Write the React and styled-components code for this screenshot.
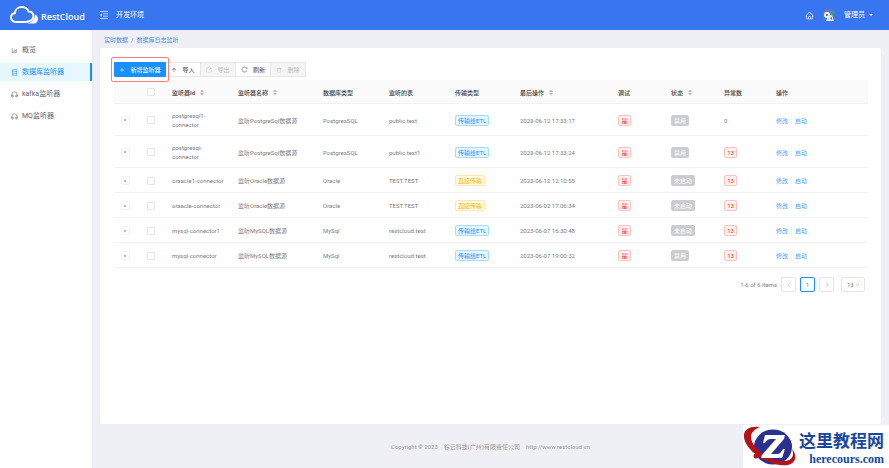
import React from 'react';
import styled, { createGlobalStyle, css } from 'styled-components';
import {
  AiOutlineArrowUp,
  AiOutlineBarChart,
  AiOutlineDatabase,
  AiOutlineDelete,
  AiOutlineDown,
  AiOutlineExport,
  AiOutlineHome,
  AiOutlineLeft,
  AiOutlinePlus,
  AiOutlineReload,
  AiOutlineRight,
} from 'react-icons/ai';
import { FiHeadphones } from 'react-icons/fi';

const palette = {
  header: '#3875f0',
  primary: '#1890ff',
  link: '#4ba3fb',
  text: '#7c7c7c',
  heading: '#444',
  line: '#f2f2f2',
  border: '#e6e6e6',
  page: '#eff0f5',
};

const GlobalStyle = createGlobalStyle`
  * {
    box-sizing: border-box;
  }

  body {
    margin: 0;
    background: ${palette.page};
    color: ${palette.text};
    font-family: Roboto, 'Noto Sans CJK SC', sans-serif;
    font-size: 6px;
    line-height: 9px;
  }

  button,
  select {
    font: inherit;
  }

  a {
    text-decoration: none;
  }
`;

const Page = styled.div`
  display: flex;
  flex-direction: column;
  min-height: 100vh;
`;

const Header = styled.header`
  display: flex;
  align-items: center;
  height: 30px;
  padding: 0 16px 0 10px;
  background: ${palette.header};
  color: #fff;
`;

const Brand = styled.a`
  display: flex;
  align-items: center;
  gap: 3px;
  width: 90px;
  color: #fff;
  font-family: 'Open Sans', sans-serif;
  font-size: 9px;
  font-weight: 600;
  line-height: 12px;

  span {
    margin-top: 4px;
  }
`;

const HeaderTitle = styled.div`
  display: flex;
  flex: 1;
  align-items: center;
  gap: 8px;
  font-size: 7px;
`;

const HeaderUser = styled.div`
  display: flex;
  align-items: center;
  gap: 9px;
  font-size: 7px;
`;

const UserButton = styled.button`
  display: flex;
  align-items: center;
  gap: 4px;
  padding: 0;
  border: 0;
  background: none;
  color: #fff;
  font-size: 7px;
`;

const Caret = styled.i`
  border: 2px solid transparent;
  border-top: 2px solid #fff;
  border-bottom: 0;
`;

const Body = styled.div`
  display: flex;
  flex: 1;
`;

const Sidebar = styled.nav`
  display: flex;
  flex-direction: column;
  flex: 0 0 93px;
  gap: 4px;
  padding-top: 11px;
  border-right: 1px solid #e8e9ee;
  background: #fff;
`;

const MenuItem = styled.a`
  display: flex;
  align-items: center;
  gap: 4px;
  height: 18px;
  padding-left: 11px;
  color: #666;
  font-size: 7px;

  ${({ $active }) =>
    $active &&
    css`
      border-right: 2px solid ${palette.primary};
      background: #e6f7ff;
      color: ${palette.primary};
    `}
`;

const Content = styled.div`
  display: flex;
  flex: 1;
  flex-direction: column;
  min-width: 0;
  padding: 0 8px 0 7px;
`;

const Breadcrumb = styled.div`
  display: flex;
  align-items: center;
  gap: 3px;
  height: 18px;
  padding-left: 4px;

  a {
    color: #4a90e8;
  }
`;

const Card = styled.main`
  flex: 1;
  padding: 14px 13px 14px 14px;
  border-radius: 2px;
  background: #fff;
`;

const Toolbar = styled.div`
  display: flex;
  height: 15px;
  margin-bottom: 3px;
`;

const ToolButton = styled.button`
  display: flex;
  align-items: center;
  justify-content: center;
  gap: 5px;
  width: 35px;
  padding: 0;
  border: 1px solid ${palette.border};
  border-left-width: 0;
  background: #fff;
  color: #444;

  &:disabled {
    background: #f5f5f5;
    color: #bbb;
  }
`;

const PrimaryButton = styled(ToolButton)`
  width: 52px;
  border: 0;
  border-radius: 1px;
  background: ${palette.primary};
  color: #fff;
`;

const Highlight = styled.div`
  position: relative;
  display: flex;

  &::after {
    content: '';
    position: absolute;
    inset: -5px -3px;
    border: 1px solid #f58080;
    border-radius: 2px;
    pointer-events: none;
  }
`;

const Table = styled.table`
  width: 100%;
  border-spacing: 0;
  table-layout: fixed;

  th,
  td {
    padding: 7px 6px 6px;
    border-bottom: 1px solid ${palette.line};
    text-align: left;
    overflow-wrap: break-word;
  }

  th {
    height: 24px;
    background: #fafafa;
    color: ${palette.heading};
    font-weight: 500;
  }

  td {
    height: 25px;
  }
`;

const HeadLabel = styled.span`
  display: flex;
  align-items: center;
  gap: 5px;
`;

const Center = styled.div`
  display: flex;
  justify-content: center;
`;

const Checkbox = styled.input.attrs({ type: 'checkbox' })`
  appearance: none;
  width: 8px;
  height: 8px;
  margin: 0;
  border: 1px solid ${palette.border};
  border-radius: 1px;
  background: #fff;

  &:checked {
    background: ${palette.primary};
  }
`;

const ExpandButton = styled.button`
  display: flex;
  align-items: center;
  justify-content: center;
  width: 9px;
  height: 9px;
  padding: 0;
  border: 1px solid ${palette.line};
  border-radius: 2px;
  background: #fff;
  color: #555;
`;

const tagTones = {
  blue: css`
    border-color: #a6dcff;
    background: #e6f7ff;
    color: #1890ff;
  `,
  orange: css`
    border-color: #ffe7b0;
    background: #fffbe6;
    color: #faad14;
  `,
  red: css`
    border-color: #ffc2be;
    background: #fff1f0;
    color: #f5222d;
  `,
  gray: css`
    border-color: #ccc;
    background: #ccc;
    color: #fff;
  `,
};

const Tag = styled.span`
  display: block;
  width: fit-content;
  min-width: 13px;
  padding: 0 2px;
  border: 1px solid;
  border-radius: 2px;
  margin: -1px 0;
  text-align: center;
  white-space: nowrap;
  ${({ $tone }) => tagTones[$tone]}
`;

const Actions = styled.div`
  display: flex;
  gap: 3px;

  a {
    color: ${palette.link};
  }

  a + a {
    padding-left: 3px;
    border-left: 1px solid ${palette.line};
  }
`;

const Pagination = styled.div`
  display: flex;
  align-items: center;
  justify-content: flex-end;
  gap: 4px;
  padding: 9px 3px 0 0;
`;

const PageButton = styled.button`
  display: flex;
  align-items: center;
  justify-content: center;
  width: 15px;
  height: 15px;
  padding: 0;
  border: 1px solid ${({ $active }) => ($active ? palette.primary : palette.border)};
  border-radius: 2px;
  background: #fff;
  color: ${({ $active }) => ($active ? palette.primary : '#bbb')};
`;

const PageSize = styled.label`
  display: grid;
  align-items: center;
  width: 24px;
  height: 15px;
  margin-left: 3px;
  border: 1px solid ${palette.border};
  border-radius: 2px;

  select,
  svg {
    grid-area: 1 / 1;
  }

  select {
    appearance: none;
    width: 100%;
    padding: 0 0 0 5px;
    border: 0;
    background: none;
    color: ${palette.text};
  }

  svg {
    justify-self: end;
    margin-right: 4px;
    color: #aaa;
    pointer-events: none;
  }
`;

const Footer = styled.footer`
  display: flex;
  align-items: center;
  justify-content: center;
  gap: 6px;
  height: 44px;
  color: #999;

  a {
    color: #999;
  }
`;

const Watermark = styled.aside`
  position: fixed;
  right: 0;
  bottom: 0;
  display: flex;
  align-items: center;
  gap: 1px;
  height: 43px;
  padding-right: 5px;
  background: #fff;
  color: #17479e;
`;

const WatermarkText = styled.div`
  display: flex;
  flex-direction: column;
  align-items: flex-end;
  font-family: 'Noto Sans CJK SC', sans-serif;
  font-size: 17px;
  font-weight: 700;
  line-height: 25px;

  small {
    font-family: 'Liberation Serif', serif;
    font-size: 12px;
    line-height: 14px;
  }
`;

const menu = [
  { label: '概览', icon: AiOutlineBarChart },
  { label: '数据库监听器', icon: AiOutlineDatabase, active: true },
  { label: 'kafka监听器', icon: FiHeadphones },
  { label: 'MQ监听器', icon: FiHeadphones },
];

const columns = [
  { width: 22 },
  { width: 30, checkbox: true },
  { width: 66, label: '监听器Id', sortable: true },
  { width: 85, label: '监听器名称', sortable: true },
  { width: 66, label: '数据库类型' },
  { width: 66, label: '监听的表' },
  { width: 65, label: '传输类型' },
  { width: 98, label: '最后操作', sortable: true },
  { width: 53, label: '调试' },
  { width: 53, label: '状态', sortable: true },
  { width: 52, label: '异常数' },
  { width: 98, label: '操作' },
];

const rows = [
  ['postgresql1-connector', '监听PostgreSql数据源', 'PostgresSQL', 'public.test', '传输给ETL', '2023-06-12 17:33:17', '禁用', 0],
  ['postgresql-connector', '监听PostgreSql数据源', 'PostgresSQL', 'public.test1', '传输给ETL', '2023-06-12 17:33:24', '禁用', 13],
  ['oraacle1-connector', '监听Oracle数据源', 'Oracle', 'TEST.TEST', '直接传输', '2023-06-12 12:10:55', '未启动', 13],
  ['oraacle-connector', '监听Oracle数据源', 'Oracle', 'TEST.TEST', '直接传输', '2023-06-02 17:06:34', '未启动', 13],
  ['mysql-connector1', '监听MySQL数据源', 'MySql', 'restcloud.test', '传输给ETL', '2023-06-07 16:30:48', '未启动', 13],
  ['mysql-connector', '监听MySQL数据源', 'MySql', 'restcloud.test', '传输给ETL', '2023-06-07 19:00:32', '禁用', 13],
];

const CloudLogo = () => (
  <svg width="28" height="18" viewBox="0 0 28 18" fill="none" aria-hidden="true">
    <path
      d="M6 16C3 16 1 14 1 11.500C1 9.200 2.500 7.500 4.800 7.200C5.200 3.500 8 1 11.800 1C15 1 17.600 2.800 18.600 5.500C21.500 5.600 23.500 7.600 23.500 10.300C23.500 13.500 20 16 15 16Z"
      stroke="#fff"
      strokeWidth="1.900"
    />
    <path
      d="M17 17.500C22 16.500 25 13 25 8.500C27 9.500 28 11 28 13C28 15.600 26.200 17.500 24 17.500Z"
      fill="#fff"
    />
  </svg>
);

const MenuFoldIcon = () => (
  <svg width="8" height="8" viewBox="0 0 8 8" fill="none" stroke="#cfe0ff" aria-hidden="true">
    <path d="M0 0.500H8 M3 2.800H8 M3 5.200H8 M0 7.500H8" strokeWidth="0.900" />
    <path d="M2 2.300V5.700L0 4Z" fill="#cfe0ff" stroke="none" />
  </svg>
);

const SortIcon = () => (
  <svg width="4" height="7" viewBox="0 0 4 7" fill="#bbb" aria-hidden="true">
    <path d="M2 0.500L4 3H0Z M2 6.500L0 4H4Z" />
  </svg>
);

const Avatar = () => (
  <svg width="12" height="13" viewBox="0 0 12 13" aria-hidden="true">
    <rect width="12" height="13" rx="2" fill="#4d77d8" />
    <path d="M1 1L5 0L6 4L2 5Z" fill="#8f69b8" />
    <path d="M7 1L11 3L10 7L7 5Z" fill="#3d9d96" />
    <circle cx="4" cy="6" r="3" fill="#eef6fb" />
    <path d="M5 7L9 6L11 12H3Z" fill="#d9e9f7" />
    <circle cx="4" cy="6" r="1" fill="#3c5578" />
    <path d="M7 9L9 8V11Z" fill="#4574a4" />
  </svg>
);

const WatermarkLogo = () => (
  <svg width="55" height="43" viewBox="0 0 55 43" aria-hidden="true">
    <ellipse cx="30" cy="22" rx="19" ry="17.500" fill="#2b3190" />
    <path
      d="M17 2C8 1 0 4 1 12C2 22 14 33 29 38C40 42 50 41 52 34C53 30 51 26 49 24C51 29 50 33 46 35C41 37 34 36 27 33C16 28 8 19 8 12C8 7 12 4 17 2Z"
      fill="#b51218"
    />
    <circle cx="13" cy="31" r="2.500" fill="#b51218" />
    <path
      d="M22 10H42L41 14L28 29H34C37 29 38 27 40 24H42L39 33H18L19 30L33 14H28C25 14 23 16 22 18H20Z"
      fill="#fff"
    />
  </svg>
);

const TableRow = ({ row }) => {
  const [id, name, dbType, table, transfer, updated, status, errors] = row;
  return (
    <tr>
      <td>
        <Center>
          <ExpandButton aria-label={`展开 ${id}`}>
            <AiOutlinePlus size={4} />
          </ExpandButton>
        </Center>
      </td>
      <td>
        <Center>
          <Checkbox aria-label={id} />
        </Center>
      </td>
      <td>{id}</td>
      <td>{name}</td>
      <td>{dbType}</td>
      <td>{table}</td>
      <td>
        <Tag $tone={transfer === '直接传输' ? 'orange' : 'blue'}>{transfer}</Tag>
      </td>
      <td>{updated}</td>
      <td>
        <Tag $tone="red">是</Tag>
      </td>
      <td>
        <Tag $tone="gray">{status}</Tag>
      </td>
      <td>{errors > 0 ? <Tag $tone="red">{errors}</Tag> : errors}</td>
      <td>
        <Actions>
          <a href="#edit">修改</a>
          <a href="#start">启动</a>
        </Actions>
      </td>
    </tr>
  );
};

const App = () => {
  return (
    <Page>
      <GlobalStyle />
      <Header>
        <Brand href="#home">
          <CloudLogo />
          <span>RestCloud</span>
        </Brand>
        <HeaderTitle>
          <MenuFoldIcon />
          开发环境
        </HeaderTitle>
        <HeaderUser>
          <AiOutlineHome size={9} />
          <Avatar />
          <UserButton>
            管理员
            <Caret />
          </UserButton>
        </HeaderUser>
      </Header>
      <Body>
        <Sidebar>
          {menu.map(({ label, icon: Icon, active }) => (
            <MenuItem key={label} href="#menu" $active={active}>
              <Icon size={7} />
              {label}
            </MenuItem>
          ))}
        </Sidebar>
        <Content>
          <Breadcrumb>
            <a href="#realtime">实时数据</a>
            <span>/</span>
            <a href="#listener">数据库日志监听</a>
          </Breadcrumb>
          <Card>
            <Toolbar>
              <Highlight>
                <PrimaryButton>
                  <AiOutlinePlus size={6} />
                  新增监听器
                </PrimaryButton>
              </Highlight>
              <ToolButton>
                <AiOutlineArrowUp size={6} />
                导入
              </ToolButton>
              <ToolButton disabled>
                <AiOutlineExport size={6} />
                导出
              </ToolButton>
              <ToolButton>
                <AiOutlineReload size={7} />
                刷新
              </ToolButton>
              <ToolButton disabled>
                <AiOutlineDelete size={6} />
                删除
              </ToolButton>
            </Toolbar>
            <Table>
              <colgroup>
                {columns.map(({ width }, i) => (
                  <col key={i} width={width} />
                ))}
              </colgroup>
              <thead>
                <tr>
                  {columns.map(({ label, sortable, checkbox }, i) => (
                    <th key={i}>
                      {checkbox ? (
                        <Center>
                          <Checkbox aria-label="全选" />
                        </Center>
                      ) : (
                        <HeadLabel>
                          {label}
                          {sortable && <SortIcon />}
                        </HeadLabel>
                      )}
                    </th>
                  ))}
                </tr>
              </thead>
              <tbody>
                {rows.map((row) => (
                  <TableRow key={row[0]} row={row} />
                ))}
              </tbody>
            </Table>
            <Pagination>
              <span>1-6 of 6 items</span>
              <PageButton aria-label="上一页">
                <AiOutlineLeft size={6} />
              </PageButton>
              <PageButton $active>1</PageButton>
              <PageButton aria-label="下一页">
                <AiOutlineRight size={6} />
              </PageButton>
              <PageSize>
                <select aria-label="每页条数" defaultValue="13">
                  <option>13</option>
                </select>
                <AiOutlineDown size={5} />
              </PageSize>
            </Pagination>
          </Card>
          <Footer>
            <span>Copyright © 2023</span>
            <span>谷云科技(广州)有限责任公司</span>
            <a href="#site">http://www.restcloud.cn</a>
          </Footer>
        </Content>
      </Body>
      <Watermark>
        <WatermarkLogo />
        <WatermarkText>
          这里教程网
          <small>herecours.com</small>
        </WatermarkText>
      </Watermark>
    </Page>
  );
};

export default App;
